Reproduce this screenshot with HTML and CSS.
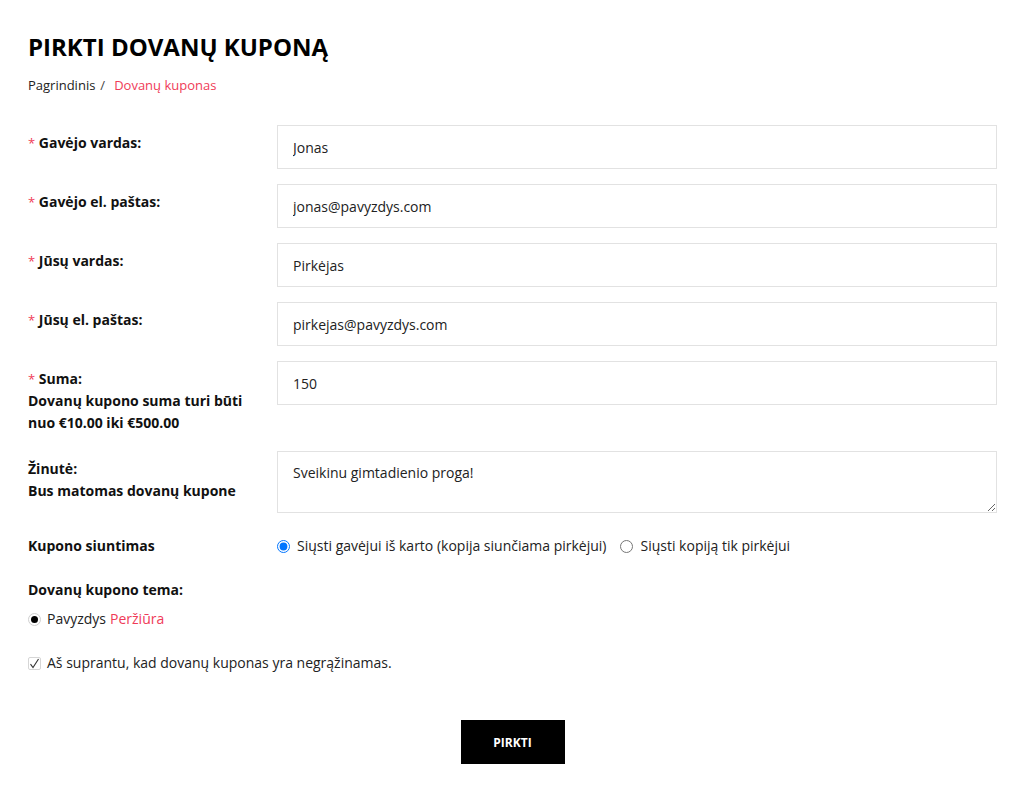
FILE: index.html
```html
<!DOCTYPE html>
<html lang="lt">
<head>
<meta charset="utf-8">
<title>Pirkti dovanų kuponą</title>
<link rel="stylesheet" href="styles.css">
</head>
<body>
<main class="page">
  <h1 class="title">PIRKTI DOVANŲ KUPONĄ</h1>
  <nav class="crumbs"><span class="crumb">Pagrindinis</span><span class="sep">/</span><span class="crumb current">Dovanų kuponas</span></nav>

  <form class="form">
    <div class="row">
      <label class="lbl"><span class="req">*</span> Gavėjo vardas:</label>
      <div class="field"><input class="inp" type="text" value="Jonas"></div>
    </div>
    <div class="row">
      <label class="lbl"><span class="req">*</span> Gavėjo el. paštas:</label>
      <div class="field"><input class="inp" type="text" value="jonas@pavyzdys.com"></div>
    </div>
    <div class="row">
      <label class="lbl"><span class="req">*</span> Jūsų vardas:</label>
      <div class="field"><input class="inp" type="text" value="Pirkėjas"></div>
    </div>
    <div class="row">
      <label class="lbl"><span class="req">*</span> Jūsų el. paštas:</label>
      <div class="field"><input class="inp" type="text" value="pirkejas@pavyzdys.com"></div>
    </div>
    <div class="row">
      <label class="lbl"><span class="req">*</span> Suma:<br>Dovanų kupono suma turi būti nuo €10.00 iki €500.00</label>
      <div class="field"><input class="inp" type="text" value="150"></div>
    </div>
    <div class="row row-msg">
      <label class="lbl">Žinutė:<br>Bus matomas dovanų kupone</label>
      <div class="field"><textarea class="txt">Sveikinu gimtadienio proga!</textarea></div>
    </div>
    <div class="row row-radio">
      <span class="lbl lbl-inline">Kupono siuntimas</span>
      <div class="field radios">
        <label class="opt"><input class="rad" type="radio" name="send" checked> Siųsti gavėjui iš karto (kopija siunčiama pirkėjui)</label>
        <label class="opt"><input class="rad" type="radio" name="send"> Siųsti kopiją tik pirkėjui</label>
      </div>
    </div>

    <div class="theme-head">Dovanų kupono tema:</div>
    <div class="theme-row"><span class="dot-radio"></span>Pavyzdys <span class="link">Peržiūra</span></div>

    <div class="agree"><span class="check"><svg width="11" height="11" viewBox="0 0 11 11"><path d="M1.5 6.2 L4 9.5 L9.5 1" fill="none" stroke="#333" stroke-width="1.1"/></svg></span>Aš suprantu, kad dovanų kuponas yra negrąžinamas.</div>

    <div class="actions"><button class="buy" type="button">PIRKTI</button></div>
  </form>
</main>
</body>
</html>
```
FILE: styles.css
```css
* { box-sizing: border-box; }
html, body { margin: 0; padding: 0; background: #fff; }
body {
  font-family: "Open Sans", "Liberation Sans", sans-serif;
  color: #222;
  font-size: 14px;
}
.page {
  padding: 29px 26px 40px 28px;
}
.title {
  margin: 0;
  font-size: 24px;
  line-height: 36px;
  font-weight: 700;
  color: #000;
  letter-spacing: 0;
}
.crumbs {
  margin-top: 10px;
  font-size: 13px;
  line-height: 20px;
  color: #222;
}
.sep { margin: 0 9px 0 5px; color: #444; }
.current { color: #ef3b58; }
.form { margin-top: 30px; }
.row {
  display: flex;
  align-items: flex-start;
  margin-bottom: 15px;
}
.lbl {
  width: 249px;
  flex: 0 0 249px;
  padding: 7px 20px 2px 0;
  font-weight: 700;
  line-height: 22px;
  color: #111;
}
.req { color: #ef3b58; font-weight: 400; font-size: 13px; }
.field { flex: 1; }
.inp {
  display: block;
  width: 100%;
  height: 44px;
  border: 1px solid #e2e2e2;
  padding: 0 15px;
  font: inherit;
  font-size: 14px;
  color: #222;
  background: #fff;
  outline: none;
}
.txt {
  display: block;
  width: 100%;
  height: 62px;
  border: 1px solid #e2e2e2;
  padding: 10px 15px;
  font: inherit;
  font-size: 14px;
  line-height: 22px;
  color: #222;
  resize: vertical;
  outline: none;
}
.row-msg { margin-bottom: 22px; }
.row-radio { align-items: center; margin-bottom: 22px; }
.lbl-inline { padding: 0 20px 0 0; }
.radios {
  display: flex;
  align-items: center;
  line-height: 22px;
  color: #222;
}
.opt { display: flex; align-items: center; margin-right: 14px; }
.rad { margin: 0 7px 0 0; width: 13px; height: 13px; }
.theme-head {
  font-weight: 700;
  line-height: 22px;
  color: #111;
}
.theme-row {
  margin-top: 7px;
  display: flex;
  align-items: center;
  line-height: 22px;
}
.dot-radio {
  width: 13px;
  height: 13px;
  border: 1px solid #cfcfcf;
  border-radius: 50%;
  margin-right: 6px;
  display: inline-flex;
  align-items: center;
  justify-content: center;
}
.dot-radio::after {
  content: "";
  width: 7px;
  height: 7px;
  border-radius: 50%;
  background: #000;
}
.link { color: #ef3b58; margin-left: 4px; }
.agree {
  margin-top: 22px;
  display: flex;
  align-items: center;
  line-height: 22px;
}
.check {
  width: 13px;
  height: 13px;
  border: 1px solid #d6d6d6;
  border-radius: 2px;
  margin-right: 6px;
  display: inline-flex;
  align-items: center;
  justify-content: center;
}
.check svg { display: block; }
.actions {
  margin-top: 46px;
  display: flex;
  justify-content: center;
}
.buy {
  width: 104px;
  height: 44px;
  background: #000;
  color: #fff;
  border: 0;
  font-family: "Open Sans", "Liberation Sans", sans-serif;
  font-weight: 700;
  font-size: 12px;
  letter-spacing: 0;
  cursor: pointer;
}
```
